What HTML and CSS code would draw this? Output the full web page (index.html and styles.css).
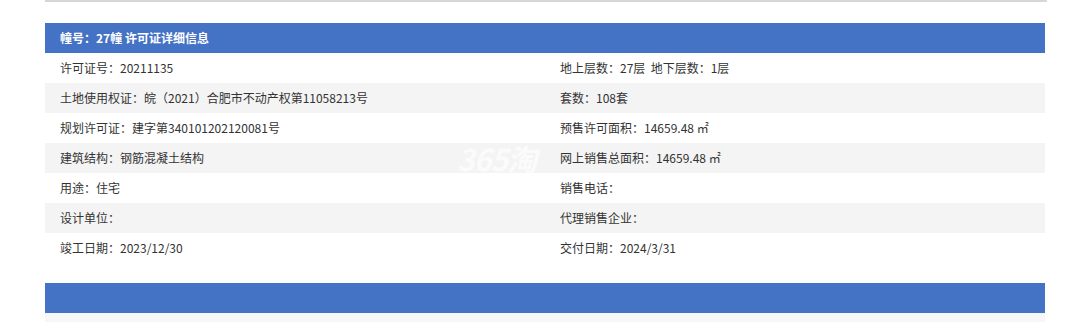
FILE: index.html
```html
<!DOCTYPE html>
<html lang="zh-CN">
<head>
<meta charset="utf-8">
<title>许可证详细信息</title>
<link rel="stylesheet" href="styles.css">
</head>
<body>
<div class="page">
  <div class="topbox"></div>
  <div class="panel">
    <div class="panel-head">幢号：27幢 许可证详细信息</div>
    <div class="rows">
      <div class="row"><div class="cell">许可证号：20211135</div><div class="cell">地上层数：27层&nbsp;&nbsp;地下层数：1层</div></div>
      <div class="row alt"><div class="cell">土地使用权证：皖（2021）合肥市不动产权第11058213号</div><div class="cell">套数：108套</div></div>
      <div class="row"><div class="cell">规划许可证：建字第340101202120081号</div><div class="cell">预售许可面积：14659.48 ㎡</div></div>
      <div class="row alt"><div class="cell">建筑结构：钢筋混凝土结构</div><div class="cell">网上销售总面积：14659.48 ㎡</div><span class="watermark">365淘</span></div>
      <div class="row"><div class="cell">用途：住宅</div><div class="cell">销售电话：</div></div>
      <div class="row alt"><div class="cell">设计单位：</div><div class="cell">代理销售企业：</div></div>
      <div class="row"><div class="cell">竣工日期：2023/12/30</div><div class="cell">交付日期：2024/3/31</div></div>
    </div>
    <div class="spacer"></div>
    <div class="panel-head next"></div>
    <div class="foot"></div>
  </div>
</div>
</body>
</html>
```

FILE: styles.css
```css
html, body {
  margin: 0;
  padding: 0;
  background: #ffffff;
}
body {
  font-family: "Noto Sans CJK JP", "Noto Sans CJK SC", "Noto Sans", sans-serif;
  font-size: 12px;
  color: #333333;
  text-spacing-trim: space-all;
}
.page {
  width: 1081px;
  height: 322px;
  overflow: hidden;
}
.topbox {
  margin-left: 45px;
  width: 999px;
  height: 0;
  border-left: 1px solid #d9d9d9;
  border-right: 2px solid #d9d9d9;
  border-bottom: 2px solid #d6d6d6;
  background: #f7f7f7;
}
.panel {
  margin: 21px 0 0 45px;
  width: 1000px;
}
.panel-head {
  height: 30px;
  line-height: 30px;
  background: #4472c5;
  color: #ffffff;
  font-weight: bold;
  padding-left: 15px;
}
.rows {
  display: flex;
  flex-direction: column;
}
.row {
  position: relative;
  display: flex;
  height: 30px;
  line-height: 30px;
  background: #ffffff;
}
.row.alt {
  background: #f4f4f4;
}
.cell {
  width: 500px;
  padding-left: 15px;
  box-sizing: border-box;
  white-space: nowrap;
}
.watermark {
  position: absolute;
  left: 412px;
  top: 0;
  font-size: 30px;
  line-height: 30px;
  font-weight: bold;
  font-style: italic;
  color: rgba(255, 255, 255, 0.7);
  letter-spacing: -1px;
}
.spacer {
  height: 20px;
}
.foot {
  height: 20px;
  background: #f7f7f7;
}
```
